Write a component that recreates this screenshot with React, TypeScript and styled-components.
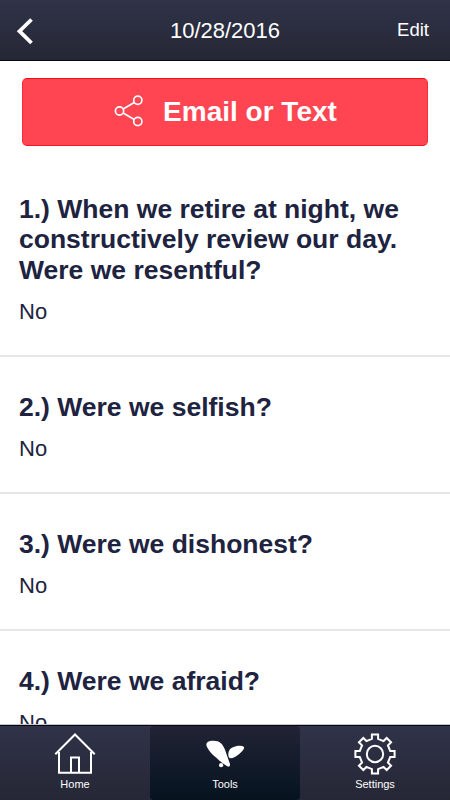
import React from "react";
import styled, { createGlobalStyle } from "styled-components";

const GlobalStyle = createGlobalStyle`
  * { box-sizing: border-box; }
  body { margin: 0; background: #fff; font-family: "Liberation Sans", Arial, sans-serif; }
`;

const Screen = styled.div`
  width: 450px;
  height: 800px;
  display: flex;
  flex-direction: column;
  overflow: hidden;
  background: #fff;
`;

const Header = styled.header`
  height: 61px;
  flex: none;
  display: grid;
  grid-template-columns: 100px 1fr 100px;
  align-items: center;
  color: #fff;
  background: linear-gradient(#303349, #252735);
  border-bottom: 1px solid #05060f;
`;

const BackButton = styled.button`
  border: 0;
  padding: 2px 0 0 16px;
  background: none;
  display: flex;
`;

const Title = styled.h1`
  margin: 1px 0 0;
  text-align: center;
  font-size: 22px;
  line-height: 26px;
  font-weight: 400;
`;

const EditButton = styled.button`
  border: 0;
  padding: 0 21px 0 0;
  background: none;
  color: #fff;
  text-align: right;
  font: 18.5px/24px "Liberation Sans", Arial, sans-serif;
`;

const Content = styled.main`
  height: 664px;
  flex: none;
  overflow: hidden;
`;

const ShareButton = styled.button`
  width: 406px;
  height: 68px;
  margin: 17px 22px 13px;
  padding: 0 0 0 1px;
  display: flex;
  align-items: center;
  justify-content: center;
  gap: 19px;
  border: 1px solid #ff2a3a;
  border-top-color: #fb0d18;
  border-bottom-color: #fb1526;
  border-radius: 5px;
  background: #ff4452;
  color: #fff;
  font: bold 28px/32px "Liberation Sans", Arial, sans-serif;

  svg {
    margin-bottom: 2px;
  }
`;

const Entry = styled.section`
  padding: 35px 19px 30px;
  border-bottom: 2px solid #e6e6e6;
`;

const Question = styled.h2`
  margin: 0;
  color: #20233f;
  font-size: 26.5px;
  line-height: 30.3px;
  font-weight: 700;
  white-space: pre-line;
`;

const Answer = styled.p`
  margin: 13.7px 0 0;
  color: #20233f;
  font-size: 22px;
  line-height: 26px;
`;

const TabBar = styled.nav`
  height: 75px;
  flex: none;
  display: grid;
  grid-template-columns: repeat(3, 1fr);
  background: linear-gradient(#303349, #252735);
  border-top: 1px solid #05060f;
  box-shadow: 0 -1px 0 #c3c7c7;
  position: relative;
`;

const Tab = styled.button<{ $active?: boolean }>`
  border: 0;
  padding: 6px 0 0;
  display: flex;
  flex-direction: column;
  align-items: center;
  gap: 2px;
  border-radius: 4px;
  background: ${(p) => (p.$active ? "linear-gradient(#222335, #05131f)" : "none")};
  color: #fff;
  font: 11px/13px "Liberation Sans", Arial, sans-serif;
`;

const BackIcon = () => (
  <svg width="18" height="28" fill="none" stroke="#fff" strokeWidth="3.8">
    <path d="M15.5 2.5 3.5 14.2 15.5 26" />
  </svg>
);

const ShareIcon = () => (
  <svg width="30" height="32" fill="none" stroke="#fff" strokeWidth="1.7">
    <circle cx="5.5" cy="16" r="4.1" />
    <circle cx="23.8" cy="5.3" r="4.1" />
    <circle cx="23.8" cy="26.5" r="4.1" />
    <path d="m9.2 13.9 11-6.4M9.2 18.1l11 6.3" />
  </svg>
);

const HomeIcon = () => (
  <svg width="44" height="44" fill="none" stroke="#fff" strokeWidth="2">
    <path d="M2.3 22.2 22 2.5 41.7 22.2M6 20v20.7h32V20M18 40V25.5h8V40" />
  </svg>
);

const ToolsIcon = () => (
  <svg width="44" height="44" fill="#fff">
    <path d="M7 9.1C11 8.4 15.300 8.600 18.200 11.500 21.500 14.800 23 20.500 24.700 25.500 25.600 28.500 27.200 31.500 27 33.300c-.2 1.500-1.700 1.500-2.800.9C20 31.900 16 28.300 11.500 24.300 8.500 21.500 5.700 18.500 4 15 2.300 11.700 4.200 9.500 7 9.100Z" />
    <path d="M25.900 25.500C24.400 20.500 26.200 16.400 30.500 15 34 13.800 38.500 13.400 40.400 14.500c1.500.9.3 2.900-.9 4.300-2.200 2.600-6 5.900-9.200 7-1.700.6-3.200.5-4.400-.3Z" />
    <circle cx="18.100" cy="33.200" r="2.100" />
  </svg>
);

const gearPath =
  Array.from({ length: 8 }, (_, i) => {
    const a = (i * Math.PI) / 4;
    return [[-3.1, -15.2], [-3.1, -19.6], [3.1, -19.6], [3.1, -15.2]]
      .map(([x, y], j) => {
        const px = 22 + x * Math.cos(a) - y * Math.sin(a);
        const py = 22 + x * Math.sin(a) + y * Math.cos(a);
        return `${i === 0 && j === 0 ? "M" : "L"}${px.toFixed(2)} ${py.toFixed(2)}`;
      })
      .join("");
  }).join("") + "Z";

const SettingsIcon = () => (
  <svg width="44" height="44" fill="none" stroke="#fff" strokeWidth="2">
    <path d={gearPath} />
    <circle cx="22" cy="22" r="8.2" />
  </svg>
);

const entries = [
  { question: "1.) When we retire at night, we\nconstructively review our day.\nWere we resentful?", answer: "No" },
  { question: "2.) Were we selfish?", answer: "No" },
  { question: "3.) Were we dishonest?", answer: "No" },
  { question: "4.) Were we afraid?", answer: "No" },
];

export default function App() {
  return (
    <Screen>
      <GlobalStyle />
      <Header>
        <BackButton aria-label="Back"><BackIcon /></BackButton>
        <Title>10/28/2016</Title>
        <EditButton>Edit</EditButton>
      </Header>
      <Content>
        <ShareButton><ShareIcon />Email or Text</ShareButton>
        {entries.map((e) => (
          <Entry key={e.question}>
            <Question>{e.question}</Question>
            <Answer>{e.answer}</Answer>
          </Entry>
        ))}
      </Content>
      <TabBar>
        <Tab><HomeIcon />Home</Tab>
        <Tab $active><ToolsIcon />Tools</Tab>
        <Tab><SettingsIcon />Settings</Tab>
      </TabBar>
    </Screen>
  );
}
